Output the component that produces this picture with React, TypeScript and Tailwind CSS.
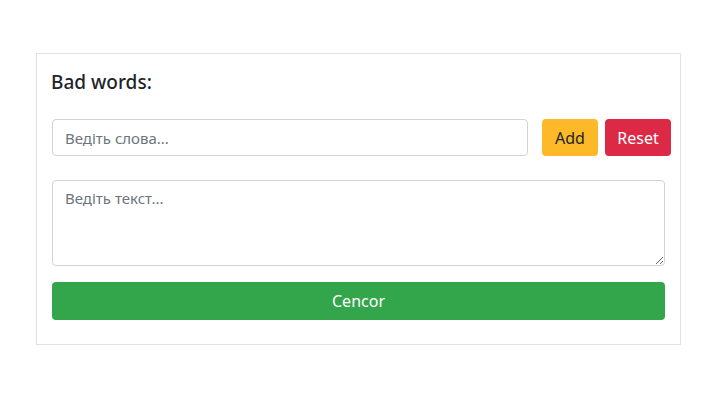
import React from "react";

export default function App() {
  return (
    <div
      className="min-h-screen bg-white pt-[53px] pl-[36px] text-[#212529]"
      style={{ fontFamily: '"Noto Sans", "Open Sans", sans-serif' }}
    >
      <div className="w-[645px] border border-[#dee2e6] px-[15px] pt-[16px] pb-[24px]">
        <h5 className="-ml-[1px] mb-[25px] text-[19px] leading-[24px] font-medium">Bad words:</h5>

        <div className="flex">
          <input
            type="text"
            placeholder="Ведіть слова..."
            className="h-[37px] w-[476px] shrink-0 rounded-[4px] border border-[#ced4da] px-3 text-[15px] outline-none placeholder:text-[#6c757d]"
          />
          <button className="ml-[14px] h-[37px] w-[56px] shrink-0 rounded-[4px] bg-[#fdb927] text-[16px] text-[#212529]">
            Add
          </button>
          <button className="ml-[7px] h-[37px] w-[66px] shrink-0 rounded-[4px] bg-[#dc2a46] text-[16px] text-white">
            Reset
          </button>
        </div>

        <textarea
          placeholder="Ведіть текст..."
          className="mt-[24px] block h-[86px] w-full rounded-[4px] border border-[#ced4da] px-3 py-[6px] text-[15px] outline-none placeholder:text-[#6c757d]"
        />

        <button className="mt-[16px] block h-[38px] w-full rounded-[4px] bg-[#33a64c] text-[16px] text-white">
          Cencor
        </button>
      </div>
    </div>
  );
}
